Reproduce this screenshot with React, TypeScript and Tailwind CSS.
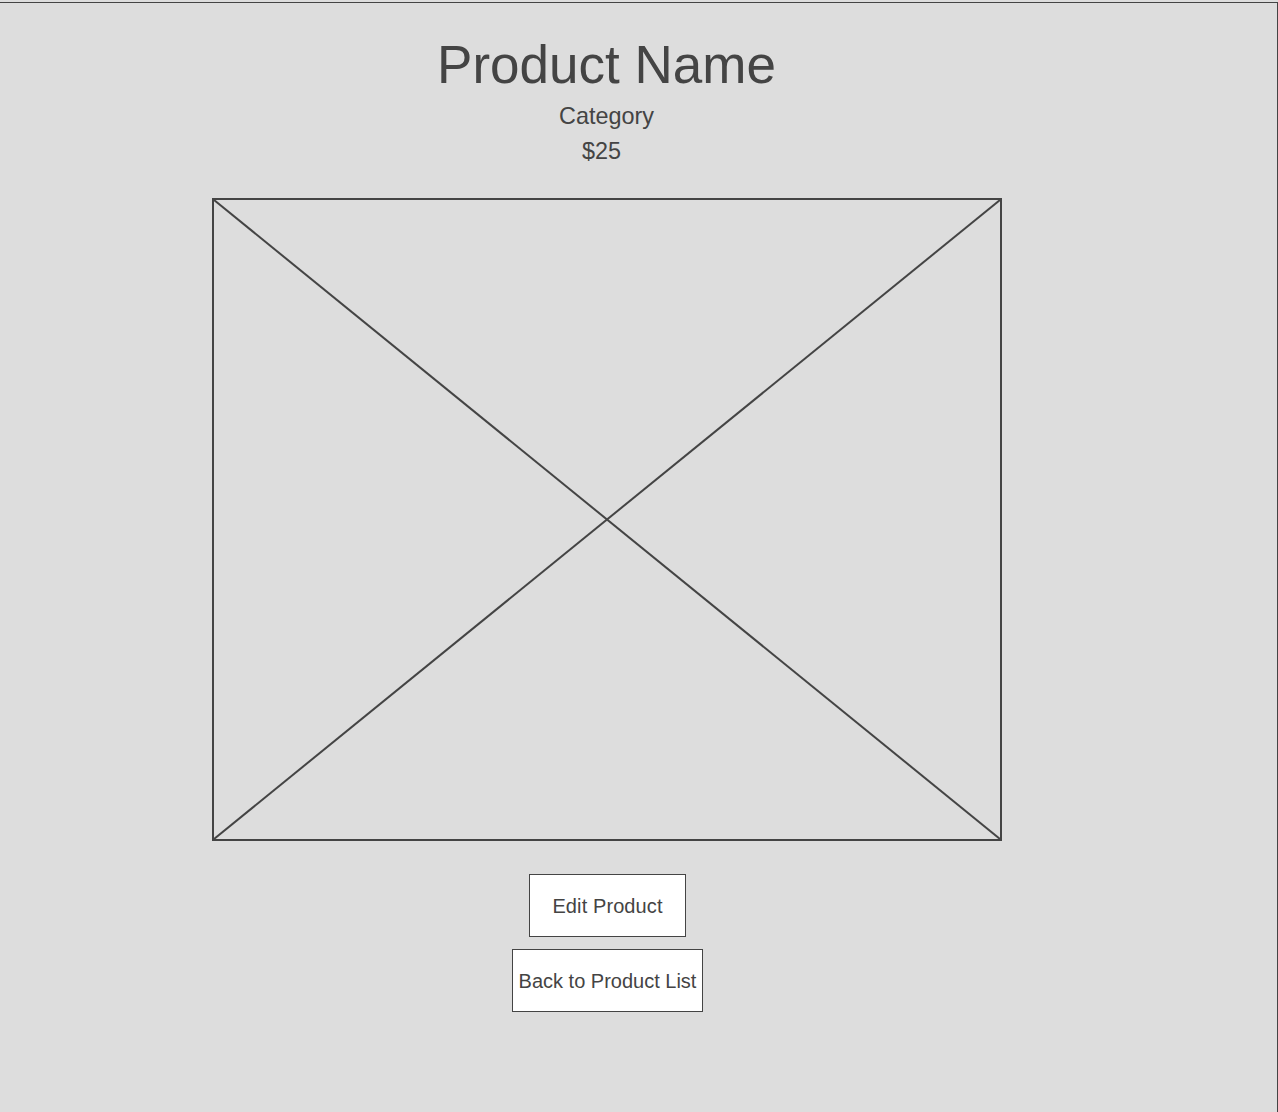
const ProductDetail = () => {
  return (
    <div className="min-h-screen bg-[#dddddd] pt-[2px] font-['Liberation_Sans',Arial,sans-serif] text-[#444444]">
      <div className="min-h-[1110px] border-t border-r border-[#444444] pr-[64px] pt-[32px] flex flex-col items-center">
        {/* Heading */}
        <h1 className="text-[53px] leading-[60px]">Product Name</h1>
        <p className="mt-[7px] text-[23.4px] leading-[28px]">Category</p>
        <p className="mt-[7px] text-[23.4px] leading-[28px] -ml-[10px]">$25</p>

        {/* Image placeholder */}
        <div className="mt-[33px] w-[790px] h-[643px] border-2 border-[#444444]">
          <svg
            className="w-full h-full block"
            viewBox="0 0 786 639"
            preserveAspectRatio="none"
          >
            <line x1="0" y1="0" x2="786" y2="639" stroke="#444444" strokeWidth="2" />
            <line x1="786" y1="0" x2="0" y2="639" stroke="#444444" strokeWidth="2" />
          </svg>
        </div>

        {/* Actions */}
        <button className="mt-[33px] ml-[2px] w-[157px] h-[63px] border border-[#444444] bg-white text-[20px] tracking-[0.1px] flex items-center justify-center">
          Edit Product
        </button>
        <button className="mt-[12px] ml-[2px] w-[191px] h-[63px] border border-[#444444] bg-white text-[20px] flex items-center justify-center whitespace-nowrap">
          Back to Product List
        </button>
      </div>
    </div>
  );
};

export default function App() {
  return <ProductDetail />;
}
